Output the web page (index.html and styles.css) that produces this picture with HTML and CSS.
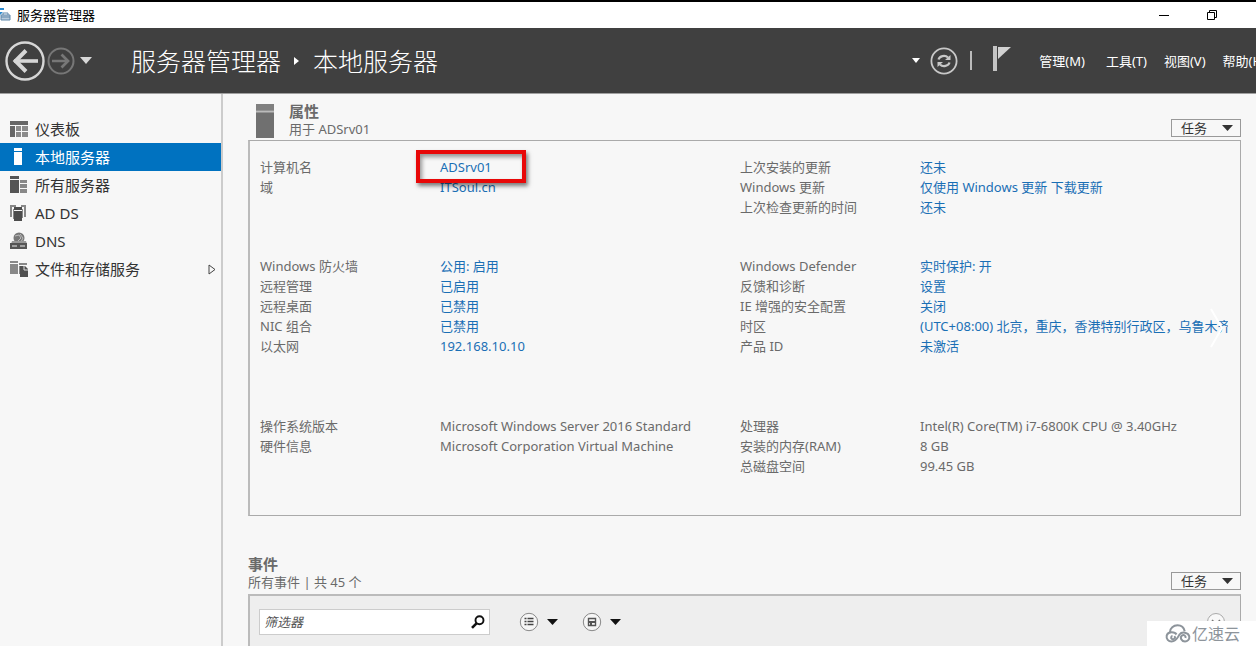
FILE: index.html
```html
<!DOCTYPE html>
<html lang="zh-CN">
<head>
<meta charset="utf-8">
<title>服务器管理器</title>
<link rel="stylesheet" href="styles.css">
</head>
<body>
<div class="window">
  <div class="titlebar">
    <svg class="app-icon" width="11" height="16" viewBox="0 0 11 16" aria-hidden="true">
      <path d="M0 1h4v2H0zM0 5h3l-3 3z" fill="#2b8ad0"/>
      <path d="M1 8h9v5H1z" fill="#b8cbdc" stroke="#5f87aa"/>
      <path d="M3 8V6h5v2M1 10h9" fill="none" stroke="#5f87aa"/>
    </svg>
    <span class="window-title">服务器管理器</span>
    <button class="win-btn" aria-label="最小化"><svg width="12" height="12" viewBox="0 0 12 12"><path d="M1 6.500h10" stroke="#000"/></svg></button>
    <button class="win-btn" aria-label="还原"><svg width="12" height="12" viewBox="0 0 12 12" fill="none" stroke="#000"><path d="M1.500 3.500h7v7h-7zM3.500 3V1.500h7v7H9"/></svg></button>
  </div>

  <header class="toolbar">
    <div class="history">
      <button class="plain" aria-label="后退"><svg width="40" height="40" viewBox="0 0 40 40" fill="none" stroke="#d6d6d6"><circle cx="20" cy="20" r="18.500" stroke-width="2.400"/><path d="M9 20h24" stroke-width="3.600"/><path d="M21 9.500L10.500 20 21 30.500" stroke-width="4"/></svg></button>
      <button class="plain" aria-label="前进"><svg width="28" height="28" viewBox="0 0 28 28" fill="none" stroke="#777"><circle cx="14" cy="14" r="12.500" stroke-width="2"/><path d="M5 14h16" stroke-width="2.500"/><path d="M14.500 7.500L21 14l-6.500 6.500" stroke-width="2.700"/></svg></button>
      <button class="plain" aria-label="历史记录"><svg width="12" height="8" viewBox="0 0 12 8"><path d="M0 0h12L6 7z" fill="#d8d8d8"/></svg></button>
    </div>
    <h1 class="crumbs"><span>服务器管理器</span><svg width="6" height="10" viewBox="0 0 6 10" aria-hidden="true"><path d="M0 1l5 4-5 4z" fill="#fff"/></svg><span>本地服务器</span></h1>
    <div class="tools">
      <button class="plain" aria-label="通知选项"><svg width="8" height="5" viewBox="0 0 8 5"><path d="M0 0h8L4 5z" fill="#fff"/></svg></button>
      <button class="plain refresh" aria-label="刷新"><svg width="28" height="28" viewBox="0 0 28 28" fill="none" stroke="#c8c8c8"><circle cx="14" cy="14" r="12.600" stroke-width="1.800"/><path d="M8.500 12.500C9.500 9 15 7.500 18 10.500M19.500 15.500C18.500 19 13 20.500 10 17.500" stroke-width="2.200"/><path d="M20.500 8v5h-5.500zM7.500 20v-5h5.500z" fill="#c8c8c8" stroke="none"/></svg></button>
      <span class="divider"></span>
      <button class="plain flag" aria-label="通知"><svg width="20" height="26" viewBox="0 0 20 26"><path d="M1 0h4v25H1z" fill="#c4c4c4"/><path d="M6 1h13L6 13z" fill="#d2d2d2"/></svg></button>
      <nav class="menu">
        <button class="plain">管理(M)</button>
        <button class="plain">工具(T)</button>
        <button class="plain">视图(V)</button>
        <button class="plain">帮助(H)</button>
      </nav>
    </div>
  </header>

  <div class="body">
    <nav class="sidebar">
      <a class="nav-item" href="#"><svg width="18" height="18" viewBox="0 0 18 18" fill="#666"><path d="M0 1h18v4H0zM0 6h5v11H0z"/><path d="M6 6h5v5H6zM12 6h6v5h-6zM6 12h5v5H6zM12 12h6v5h-6z" fill="#8b8b8b"/></svg><span>仪表板</span></a>
      <a class="nav-item selected" href="#" aria-current="page"><svg width="18" height="18" viewBox="0 0 18 18" fill="#fff"><path d="M4 0h8v3H4zM4 4h8v13H4z"/></svg><span>本地服务器</span></a>
      <a class="nav-item" href="#"><svg width="18" height="18" viewBox="0 0 18 18" fill="#555"><path d="M0 0h9v3H0zM0 4h9v13H0z"/><path d="M10 4h7v3h-7zM10 8h7v4h-7zM10 13h7v4h-7z" fill="#888"/></svg><span>所有服务器</span></a>
      <a class="nav-item" href="#"><svg width="18" height="18" viewBox="0 0 18 18" fill="#888"><path d="M0 1h6v2H2v10H0zM11 1h5v12h-2V3h-3zM3 5h1v10H3zM12 5h1v9h-1z"/><path d="M4 3h8v3H4zM4 7h8v10H4z" fill="#4c4c4c"/></svg><span>AD DS</span></a>
      <a class="nav-item" href="#"><svg width="18" height="18" viewBox="0 0 18 18"><circle cx="9" cy="6" r="5.500" fill="#777"/><path d="M5 4l4-1 2 3-3 3M10 2l3 4-2 4" fill="none" stroke="#bbb"/><path d="M2 9h14l1 3H1z" fill="#999"/><path d="M0 11h17v6H0z" fill="#555"/><path d="M2 14h5M10 14h5" stroke="#eee"/></svg><span>DNS</span></a>
      <a class="nav-item" href="#"><svg width="18" height="18" viewBox="0 0 18 18" fill="#888"><path d="M0 1h8v2H0zM0 4h8v10H0zM9 3h8v2H9zM9 6h2v8H9z"/><path d="M10 6h5l3 3v8h-8z" fill="#505050"/><path d="M14 6v4h4" fill="none" stroke="#ddd"/></svg><span>文件和存储服务</span><svg class="expand" width="8" height="11" viewBox="0 0 8 11"><path d="M1 1l6 4.500L1 10z" fill="none" stroke="#444"/></svg></a>
    </nav>

    <main class="content">
      <section>
        <div class="section-head">
          <svg class="server-icon" width="18" height="34" viewBox="0 0 18 34" aria-hidden="true"><path d="M0 0h18v34H0z" fill="#707070"/><path d="M0 0h18v6H0z" fill="#808080"/><path d="M0 7.500h18" stroke="#bbb" stroke-width="2"/></svg>
          <div class="heading"><h2>属性</h2><p>用于 ADSrv01</p></div>
          <button class="tasks">任务<svg width="11" height="6" viewBox="0 0 11 6"><path d="M0 0h11L5.500 6z" fill="#333"/></svg></button>
        </div>
        <div class="panel properties">
          <dl>
            <dt>计算机名</dt><dd class="marked"><a href="#">ADSrv01</a></dd>
            <dt>域</dt><dd><a href="#">ITSoul.cn</a></dd>
          </dl>
          <dl>
            <dt>上次安装的更新</dt><dd><a href="#">还未</a></dd>
            <dt>Windows 更新</dt><dd><a href="#">仅使用 Windows 更新 下载更新</a></dd>
            <dt>上次检查更新的时间</dt><dd><a href="#">还未</a></dd>
          </dl>
          <dl>
            <dt>Windows 防火墙</dt><dd><a href="#">公用: 启用</a></dd>
            <dt>远程管理</dt><dd><a href="#">已启用</a></dd>
            <dt>远程桌面</dt><dd><a href="#">已禁用</a></dd>
            <dt>NIC 组合</dt><dd><a href="#">已禁用</a></dd>
            <dt>以太网</dt><dd><a href="#">192.168.10.10</a></dd>
          </dl>
          <dl>
            <dt>Windows Defender</dt><dd><a href="#">实时保护: 开</a></dd>
            <dt>反馈和诊断</dt><dd><a href="#">设置</a></dd>
            <dt>IE 增强的安全配置</dt><dd><a href="#">关闭</a></dd>
            <dt>时区</dt><dd><a href="#">(UTC+08:00) 北京，重庆，香港特别行政区，乌鲁木齐</a></dd>
            <dt>产品 ID</dt><dd><a href="#">未激活</a></dd>
          </dl>
          <dl>
            <dt>操作系统版本</dt><dd>Microsoft Windows Server 2016 Standard</dd>
            <dt>硬件信息</dt><dd>Microsoft Corporation Virtual Machine</dd>
          </dl>
          <dl>
            <dt>处理器</dt><dd>Intel(R) Core(TM) i7-6800K CPU @ 3.40GHz</dd>
            <dt>安装的内存(RAM)</dt><dd>8 GB</dd>
            <dt>总磁盘空间</dt><dd>99.45 GB</dd>
          </dl>
          <button class="plain next" aria-label="下一个"><svg width="14" height="40" viewBox="0 0 14 40"><path d="M1 1l11 19L1 39" fill="none" stroke="#fff" stroke-width="2"/></svg></button>
        </div>
      </section>

      <section class="events">
        <div class="section-head">
          <div class="heading"><h2>事件</h2><p>所有事件 | 共 45 个</p></div>
          <button class="tasks">任务<svg width="11" height="6" viewBox="0 0 11 6"><path d="M0 0h11L5.500 6z" fill="#333"/></svg></button>
        </div>
        <div class="panel event-bar">
          <div class="filter">
            <input type="text" placeholder="筛选器" aria-label="筛选器">
            <button class="plain" aria-label="搜索"><svg width="14" height="14" viewBox="0 0 14 14" fill="none" stroke="#111"><circle cx="8.500" cy="5.200" r="4" stroke-width="1.900"/><path d="M5.500 8.300L1 12.800" stroke-width="2.600"/></svg></button>
          </div>
          <div class="bar-tool">
            <button class="plain" aria-label="筛选条件"><svg width="20" height="20" viewBox="0 0 20 20"><circle cx="10" cy="10" r="8.700" fill="#f6f6f6" stroke="#888"/><path d="M5.500 6.500h2M5.500 9.500h2M5.500 12.500h2M8.500 6.500h6M8.500 9.500h6M8.500 12.500h6" stroke="#444" stroke-width="1.500"/></svg></button>
            <button class="plain" aria-label="筛选条件菜单"><svg width="11" height="6" viewBox="0 0 11 6"><path d="M0 0h11L5.500 6z" fill="#111"/></svg></button>
          </div>
          <div class="bar-tool">
            <button class="plain" aria-label="保存查询"><svg width="20" height="20" viewBox="0 0 20 20"><circle cx="10" cy="10" r="8.700" fill="#f6f6f6" stroke="#888"/><path d="M6.500 6.500h7v7h-7z" fill="none" stroke="#555" stroke-width="1.400"/><path d="M7 9h6v2H7zM8 11h2v3H8z" fill="#555"/></svg></button>
            <button class="plain" aria-label="保存查询菜单"><svg width="11" height="6" viewBox="0 0 11 6"><path d="M0 0h11L5.500 6z" fill="#111"/></svg></button>
          </div>
          <button class="plain collapse" aria-label="展开"><svg width="20" height="20" viewBox="0 0 20 20" fill="none"><circle cx="10" cy="10" r="8.500" fill="#f8f8f8" stroke="#aaa"/><path d="M6 8l4 4 4-4" stroke="#777" stroke-width="1.500"/></svg></button>
        </div>
      </section>
    </main>
  </div>

  <div class="watermark">
    <svg width="26" height="19" viewBox="0 0 26 19" fill="none" stroke="#8d949b" stroke-width="2"><path d="M11.500 10.500C10 7.500 3 7 1.700 11.500 1 15 3.500 17.500 6.500 17.500c5 0 6-4 8-7 2.500-3.500 9-2 9.800 2 .5 3-2 5-4.300 5-3.500 0-5.500-4-3-6 2-1.200 4 .5 3.500 2.500"/><path d="M5 8C5 4 8.500 1.300 12.500 1.300c4 0 6.500 2.500 7.200 6M9.500 12c1.500 2-1 4-2.500 3-1.500-1-.8-3 .5-3"/></svg>
    <span>亿速云</span>
  </div>
</div>
</body>
</html>
```
FILE: styles.css
```css
*, *::after { box-sizing: border-box; }
body {
  margin: 0;
  background: #f7f7f7;
  color: #6a6a6a;
  font: 13px/20px "Noto Sans", "Noto Sans CJK SC", sans-serif;
}
h1, h2, p, dl, dd { margin: 0; font-weight: 400; }
a { color: #1a6fb5; text-decoration: none; }
svg { display: block; flex: none; }
button, input { font: inherit; color: inherit; }
.plain { padding: 0; border: 0; background: none; white-space: nowrap; }

.window {
  position: relative;
  display: flex;
  flex-direction: column;
  height: 100vh;
  overflow: hidden;
  border-top: 2px solid #000;
}
.titlebar {
  display: flex;
  align-items: center;
  flex: none;
  height: 26px;
  padding-right: 20px;
  background: #fff;
  color: #000;
}
.window-title { flex: 1; margin-left: 6px; }
.win-btn {
  display: grid;
  place-items: center;
  width: 48px;
  height: 24px;
  padding: 0;
  border: 0;
  background: none;
}

.toolbar {
  display: flex;
  align-items: center;
  flex: none;
  height: 66px;
  padding-left: 5px;
  background: #404040;
  border-bottom: 1px solid #a0a0a0;
  color: #fff;
}
.history { display: flex; align-items: center; gap: 2px; width: 126px; }
.history button:last-child { margin-left: 3px; }
.crumbs {
  display: flex;
  align-items: center;
  gap: 13px;
  font-size: 25px;
  line-height: 32px;
  font-weight: 300;
  white-space: nowrap;
}
.tools { display: flex; align-items: center; margin: 0 -10px 0 auto; }
.refresh { margin: 0 12px 0 10px; }
.divider { width: 2px; height: 19px; background: #bbb; }
.flag { margin: 0 27px 4px 20px; }
.menu { display: flex; gap: 17px; }
.menu button:first-child { margin-right: 4px; }

.body { display: flex; flex: 1; min-height: 0; }
.sidebar {
  flex: none;
  width: 223px;
  padding-top: 21px;
  border-right: 2px solid #ccc;
}
.nav-item {
  display: flex;
  align-items: center;
  gap: 7px;
  height: 28px;
  padding: 0 5px 0 10px;
  color: #333;
  font-size: 15px;
}
.nav-item.selected { background: #0072c0; color: #fff; }
.expand { margin-left: auto; }

.content { flex: 1; min-width: 0; padding: 8px 15px 0 25px; }
.section-head { display: flex; padding-bottom: 2px; }
.server-icon { margin: 2px 15px 0 8px; }
.heading { flex: 1; line-height: 18px; }
.heading h2 { font-size: 15px; line-height: 18px; font-weight: 700; }
.tasks {
  display: flex;
  align-items: center;
  justify-content: space-between;
  align-self: flex-end;
  width: 70px;
  height: 18px;
  margin-bottom: 1px;
  padding: 0 7px 0 9px;
  border: 1px solid #999;
  background: #f7f7f7;
  color: #333;
  line-height: 16px;
}
.panel { border: 1px solid #aaa; border-left: 2px solid #bbb; }
.properties {
  position: relative;
  display: grid;
  grid-template-columns: 60fr 61fr;
  align-content: start;
  padding: 16px 12px 39px 10px;
}
dl {
  display: grid;
  grid-template-columns: 180px minmax(0, 1fr);
  align-content: start;
  padding-bottom: 39px;
}
dl:nth-of-type(3), dl:nth-of-type(4) { padding-bottom: 60px; }
dl:nth-of-type(5), dl:nth-of-type(6) { padding-bottom: 0; }
dt, dd { white-space: nowrap; }
dd { overflow: hidden; }
.marked { position: relative; overflow: visible; }
.marked::after {
  content: "";
  position: absolute;
  left: -24px;
  top: -7px;
  width: 110px;
  height: 33px;
  border: 4px solid #e80808;
  box-shadow: 2px 3px 4px rgba(0, 0, 0, .5), inset 2px 3px 4px rgba(0, 0, 0, .4);
  pointer-events: none;
}
.next { position: absolute; right: 16px; top: 50%; transform: translateY(-50%); }

.events { margin-top: 39px; }
.event-bar {
  display: flex;
  align-items: center;
  height: 100px;
  padding: 0 14px 46px 9px;
  border-top: 2px solid #bbb;
  background: #eee;
}
.filter {
  display: flex;
  align-items: center;
  width: 231px;
  height: 26px;
  margin-right: 20px;
  padding-right: 4px;
  border: 1px solid #ccc;
  background: #fff;
}
.filter input {
  flex: 1;
  min-width: 0;
  padding: 0 4px;
  border: 0;
  background: none;
  outline: 0;
}
.filter input::placeholder { color: #555; font-style: italic; opacity: 1; }
.bar-tool { display: flex; align-items: center; gap: 8px; margin-left: 9px; }
.bar-tool + .bar-tool { margin-left: 24px; }
.collapse { margin-left: auto; }
.events .section-head { padding-bottom: 3px; }

.watermark {
  position: absolute;
  right: 0;
  bottom: 0;
  display: flex;
  align-items: center;
  gap: 1px;
  width: 109px;
  height: 25px;
  padding-left: 18px;
  background: #fff;
  color: #8d949b;
  font-size: 16px;
}
```
